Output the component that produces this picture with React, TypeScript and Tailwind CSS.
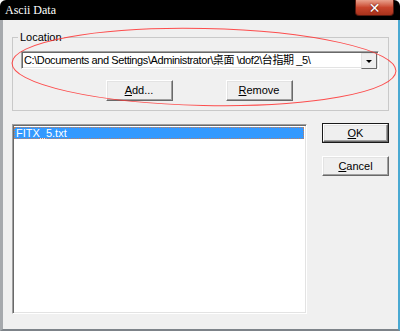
import React from "react";

const ui = { fontFamily: '"Liberation Sans", "Noto Sans CJK TC", sans-serif' };

function Btn({ children, def = false, w = "w-[67px]", h = "h-[21px]" }: { children: React.ReactNode; def?: boolean; w?: string; h?: string }) {
  return (
    <div className={`${w} ${h} ${def ? "border border-[#1a1a1a]" : ""} flex`}>
      <div className="flex-1 flex items-center justify-center bg-[#efefef] border border-t-[#ffffff] border-l-[#ffffff] border-b-[#696969] border-r-[#696969] shadow-[inset_-1px_-1px_0_#a0a0a0,inset_1px_1px_0_#e3e3e3] text-[11px] text-black leading-none">
        {children}
      </div>
    </div>
  );
}

export default function App() {
  return (
    <div className="w-[400px] h-[331px] bg-white relative overflow-hidden" style={ui}>
      <div className="w-full h-full flex flex-col rounded-t-[6px] overflow-hidden">
        {/* Title bar */}
        <div className="h-[20px] bg-black flex items-start justify-between shrink-0">
          <div className="pl-[5px] pt-[4px] text-white text-[12px] leading-none" style={{ fontFamily: '"Liberation Serif", serif' }}>
            Ascii Data
          </div>
          <div className="mr-[6px] w-[39px] h-[16px] rounded-b-[4px] border border-t-0 border-[#5a1a10] bg-gradient-to-b from-[#e8a08c] via-[#c8452c] to-[#a8321c] flex items-center justify-center">
            <span className="text-white text-[14px] font-bold leading-none [text-shadow:0_0_2px_#400]" style={{ fontFamily: '"DejaVu Sans", sans-serif' }}>✕</span>
          </div>
        </div>
        {/* Body */}
        <div className="flex-1 bg-[#f0f0f0] border-l-[3px] border-l-[#a6a9ad] border-r-[2px] border-r-[#4aa9d2] border-b-[2px] border-b-[#7d8389] pl-[9px] pt-[11px]">
          <fieldset className="w-[377px] border border-[#c9c9c9] px-[8px] pt-[7px] pb-[9px]">
            <legend className="-ml-[3px] px-[2px] text-[11px] leading-[13px] text-black">Location</legend>
            {/* combo */}
            <div className="w-[358px] h-[18px] flex border border-t-[#a0a0a0] border-l-[#a0a0a0] border-b-white border-r-white shadow-[inset_1px_1px_0_#696969,inset_-1px_-1px_0_#e3e3e3] bg-white">
              <div className="flex-1 pl-[2px] pt-[2px] text-[11px] leading-[13px] text-black whitespace-nowrap overflow-hidden tracking-[-0.4px]">
                C:\Documents and Settings\Administrator\桌面 \dof2\台指期 _5\
              </div>
              <div className="w-[16px] h-[16px] mt-[1px] mr-[1px] bg-[#efefef] border border-t-[#e3e3e3] border-l-[#e3e3e3] border-b-[#696969] border-r-[#696969] flex items-center justify-center">
                <div className="w-0 h-0 border-l-[3px] border-r-[3px] border-t-[3px] border-l-transparent border-r-transparent border-t-black" />
              </div>
            </div>
            <div className="mt-[11px] flex justify-center gap-[53px] pr-[3px]">
              <Btn><span><u>A</u>dd...</span></Btn>
              <Btn><span><u>R</u>emove</span></Btn>
            </div>
          </fieldset>
          <div className="mt-[12px] flex items-start gap-[15px]">
            <div className="mt-[1px] w-[295px] h-[190px] border border-t-[#a0a0a0] border-l-[#a0a0a0] border-b-white border-r-white shadow-[inset_1px_1px_0_#696969,inset_-1px_-1px_0_#e3e3e3] bg-white p-[2px] pl-[1px]">
              <div className="h-[12px] bg-[#3399ff] text-white text-[11px] leading-[12px] pl-[2px] overflow-hidden outline outline-1 outline-dotted outline-[#c08060] -outline-offset-1">
                FITX_5.txt
              </div>
            </div>
            <div className="flex flex-col gap-[13px]">
              <Btn def h="h-[20px]"><span><u>O</u>K</span></Btn>
              <Btn h="h-[20px]"><span><u>C</u>ancel</span></Btn>
            </div>
          </div>
        </div>
      </div>
      <svg className="absolute inset-0 pointer-events-none" width="400" height="331">
        <ellipse cx="204" cy="67" rx="192" ry="38.5" fill="none" stroke="#ff3030" strokeWidth="1" strokeOpacity="0.85" transform="rotate(1.2 204 67)" />
      </svg>
    </div>
  );
}
